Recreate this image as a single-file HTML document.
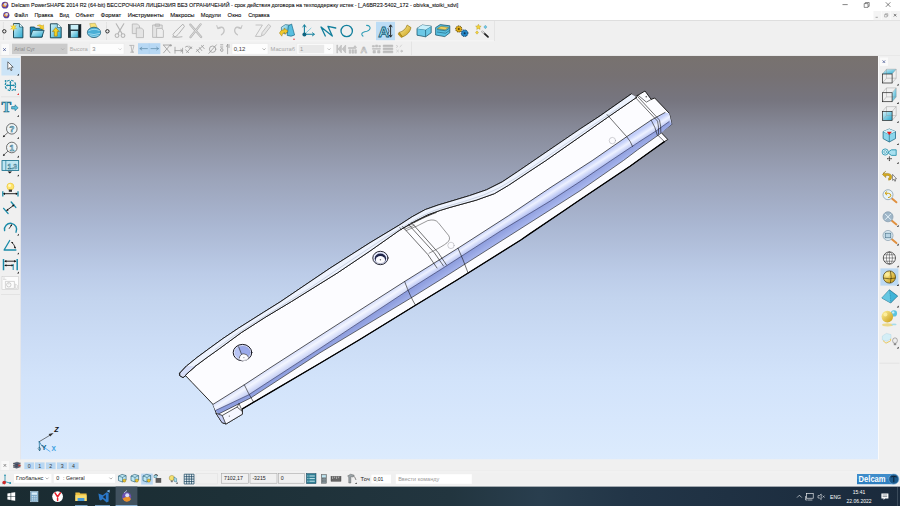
<!DOCTYPE html>
<html lang="ru"><head><meta charset="utf-8"><title>Delcam PowerSHAPE</title>
<style>
html,body{margin:0;padding:0;background:#f0f0f0;overflow:hidden}
body{width:900px;height:506px;position:relative;font-family:"Liberation Sans",sans-serif}
svg{position:absolute;left:0;top:0;display:block}
text{font-family:"Liberation Sans",sans-serif}
</style></head><body>
<svg width="900" height="506" viewBox="0 0 900 506">
<defs>
<linearGradient id="vp" x1="0" y1="0" x2="0" y2="1">
<stop offset="0" stop-color="#78726f"/>
<stop offset="0.05" stop-color="#767173"/>
<stop offset="0.11" stop-color="#76757f"/>
<stop offset="0.18" stop-color="#878a99"/>
<stop offset="0.30" stop-color="#9ba3b9"/>
<stop offset="0.42" stop-color="#aab7d2"/>
<stop offset="0.54" stop-color="#bccce8"/>
<stop offset="0.60" stop-color="#c3d4ee"/>
<stop offset="0.70" stop-color="#cbdcf5"/>
<stop offset="0.80" stop-color="#d2e3fa"/>
<stop offset="0.90" stop-color="#d7e7fc"/>
<stop offset="1" stop-color="#dcebfd"/>
</linearGradient>
<linearGradient id="band" gradientUnits="userSpaceOnUse" x1="404.6" y1="281.5" x2="410.3" y2="290.4">
<stop offset="0" stop-color="#c3cffa"/>
<stop offset="0.4" stop-color="#edf1ff"/>
<stop offset="1" stop-color="#acbaf1"/>
</linearGradient>
<linearGradient id="band2" gradientUnits="userSpaceOnUse" x1="410.3" y1="290.4" x2="415" y2="297.6">
<stop offset="0" stop-color="#8e9ede"/><stop offset="1" stop-color="#a9b7ee"/>
</linearGradient>
<linearGradient id="cy" x1="0" y1="0" x2="1" y2="1">
<stop offset="0" stop-color="#d8f4fb"/><stop offset="1" stop-color="#2aa9cf"/>
</linearGradient>
<linearGradient id="gold" x1="0" y1="0" x2="1" y2="1">
<stop offset="0" stop-color="#fff2a0"/><stop offset="1" stop-color="#c89a10"/>
</linearGradient>
<linearGradient id="tb" x1="0" y1="0" x2="1" y2="0">
<stop offset="0" stop-color="#1a2b31"/><stop offset="0.25" stop-color="#1d3037"/><stop offset="0.5" stop-color="#22353f"/><stop offset="0.6" stop-color="#293e4e"/><stop offset="0.7" stop-color="#223547"/><stop offset="1" stop-color="#1a2a3c"/>
</linearGradient>
</defs>
<rect x="0" y="0" width="900" height="506" fill="#f0f0f0"/>
<rect x="0" y="0" width="900" height="20.3" fill="#ffffff"/>
<rect x="0" y="20.2" width="900" height="0.7" fill="#d4d4d4"/>
<rect x="21" y="56" width="857" height="403.5" fill="url(#vp)"/>
<g stroke-linejoin="round" stroke-linecap="round">
<polygon points="179.8,373.1 186.5,366.0 197.0,357.5 208.7,348.9 223.0,338.5 238.7,328.0 263.4,312.4 280.0,302.0 330.0,268.2 370.0,242.7 399.1,225.2 412.2,216.7 425.2,209.6 438.2,205.0 450.0,201.5 469.6,195.6 486.5,189.8 502.2,181.9 517.8,171.5 540.0,156.3 579.1,129.6 600.0,115.9 631.2,94.0 634.6,97.3 638.0,95.2 645.0,91.0 651.2,99.4 654.7,98.0 669.2,113.2 671.8,124.3 660.9,132.3 667.8,139.5 664.4,141.6 664.4,141.6 652.6,150.0 630.0,166.3 580.0,199.8 565.0,210.0 530.0,233.6 520.8,240.0 457.0,280.0 415.5,305.2 359.0,340.0 320.0,363.2 270.0,392.6 242.4,408.9 242.4,414.2 226.0,424.0 222.2,422.6 216.3,413.5 213.0,404.4 206.0,397.0 199.0,389.7 192.0,382.4 185.6,375.7 183.0,377.6 179.8,375.7" fill="#fcfcff" stroke="#111" stroke-width="0.9"/>
<polygon points="213.0,404.4 244.3,384.8 270.0,367.9 320.0,335.7 404.6,281.5 458.0,248.2 508.7,215.6 550.0,187.8 592.2,160.6 626.7,136.7 651.2,120.1 665.0,112.5 669.2,113.2 671.8,124.3 669.2,121.5 656.7,130.5 640.0,141.2 610.4,161.0 580.0,181.6 550.0,201.2 500.0,231.4 440.0,270.0 408.6,289.8 320.0,348.4 248.3,395.0 215.5,410.5" fill="url(#band)" stroke="none"/>
<polygon points="215.5,410.5 248.3,395.0 320.0,348.4 408.6,289.8 440.0,270.0 500.0,231.4 550.0,201.2 580.0,181.6 610.4,161.0 640.0,141.2 656.7,130.5 669.2,121.5 671.8,124.3 660.9,133.3 637.4,150.0 623.5,160.5 580.0,190.8 550.0,210.0 502.8,240.0 440.0,280.0 410.5,298.3 320.0,352.8 251.0,397.8 239.1,403.7 218.2,414.2" fill="url(#band2)" stroke="none"/>
<polygon points="213.0,404.4 244.3,384.8 270.0,367.9 320.0,335.7 404.6,281.5 408.6,289.8 320.0,348.4 248.3,395.0 215.5,410.5" fill="#ffffff" opacity="0.32"/>
<polyline points="213.0,404.4 244.3,384.8 270.0,367.9 320.0,335.7 404.6,281.5 458.0,248.2 508.7,215.6 550.0,187.8 592.2,160.6 626.7,136.7 651.2,120.1 665.0,112.5" fill="none" stroke="#111" stroke-width="0.7"/>
<polyline points="669.2,121.5 656.7,130.5 640.0,141.2 610.4,161.0 580.0,181.6 550.0,201.2 500.0,231.4 440.0,270.0 408.6,289.8 320.0,348.4 248.3,395.0 215.5,410.5" fill="none" stroke="#1e2450" stroke-width="0.6"/>
<polyline points="660.9,133.3 637.4,150.0 623.5,160.5 580.0,190.8 550.0,210.0 502.8,240.0 440.0,280.0 410.5,298.3 320.0,352.8 251.0,397.8 239.1,403.7 218.2,414.2" fill="none" stroke="#111" stroke-width="0.6"/>
<polyline points="664.4,141.6 652.6,150.0 630.0,166.3 580.0,199.8 565.0,210.0 530.0,233.6 520.8,240.0 457.0,280.0 415.5,305.2 359.0,340.0 320.0,363.2 270.0,392.6 242.4,408.9" fill="none" stroke="#000" stroke-width="1.3"/>
<polyline points="185.6,375.0 195.6,366.0 207.0,357.5 219.1,348.9 241.3,332.6 264.7,317.6 291.5,301.5 337.3,273.0 370.0,251.0 399.1,230.5 414.8,221.3 427.8,214.8 440.8,210.2 450.0,207.4 476.1,200.2 494.3,193.7 508.7,185.2 528.2,172.2 545.2,161.0 585.6,132.8 607.8,117.2 636.7,97.3" fill="none" stroke="#111" stroke-width="0.9"/>
<polygon points="179.8,373.1 186.5,366.0 197.0,357.5 208.7,348.9 223.0,338.5 238.7,328.0 263.4,312.4 280.0,302.0 330.0,268.2 370.0,242.7 399.1,225.2 412.2,216.7 425.2,209.6 438.2,205.0 450.0,201.5 469.6,195.6 486.5,189.8 502.2,181.9 517.8,171.5 540.0,156.3 579.1,129.6 600.0,115.9 631.2,94.0 636.7,97.3 607.8,117.2 585.6,132.8 545.2,161.0 528.2,172.2 508.7,185.2 494.3,193.7 476.1,200.2 450.0,207.4 440.8,210.2 427.8,214.8 414.8,221.3 399.1,230.5 370.0,251.0 337.3,273.0 291.5,301.5 264.7,317.6 241.3,332.6 219.1,348.9 207.0,357.5 195.6,366.0 185.6,375.0" fill="#eef3fe" stroke="none"/>
<polyline points="179.8,373.1 186.5,366.0 197.0,357.5 208.7,348.9 223.0,338.5 238.7,328.0 263.4,312.4 280.0,302.0 330.0,268.2 370.0,242.7 399.1,225.2 412.2,216.7 425.2,209.6 438.2,205.0 450.0,201.5 469.6,195.6 486.5,189.8 502.2,181.9 517.8,171.5 540.0,156.3 579.1,129.6 600.0,115.9 631.2,94.0" fill="none" stroke="#111" stroke-width="0.9"/>
<polyline points="185.6,375.0 195.6,366.0 207.0,357.5 219.1,348.9 241.3,332.6 264.7,317.6 291.5,301.5 337.3,273.0 370.0,251.0 399.1,230.5 414.8,221.3 427.8,214.8 440.8,210.2 450.0,207.4 476.1,200.2 494.3,193.7 508.7,185.2 528.2,172.2 545.2,161.0 585.6,132.8 607.8,117.2 636.7,97.3" fill="none" stroke="#111" stroke-width="0.9"/>
<polyline points="215.1,349.5 233.3,336.2 252.9,323.4 278.6,307.6 309.8,288.1 351.2,260.2 385.8,237.2 408.2,223.8 421.2,216.3 434.2,210.5 445.3,206.8 464.2,201.4 483.2,195.2 498.8,188.1 516.4,177.7 532.7,166.8 564.0,145.2 594.7,124.0 619.6,107.2" fill="none" stroke="#a9b4c8" stroke-width="0.5"/>
<path d="M402.4 226.5 L427.8 254.5 L437 268 M411.5 222.6 L438.2 252.6 L446.5 265 M408.5 224.5 L434.5 253 L443.5 266" fill="none" stroke="#111" stroke-width="0.6"/>
<path d="M607.1 114.6 L626.7 136.7 Q630.5 141 632.6 146.5" fill="none" stroke="#111" stroke-width="0.6"/>
<path d="M637.4 96.3 L659.5 120.1 Q661 126 660.9 132.6 M635.5 97.6 L657.6 121.2 Q659 127 658.5 134" fill="none" stroke="#111" stroke-width="0.6"/>
<path d="M651.2 120.1 Q655.4 127 657.4 135.4" fill="none" stroke="#111" stroke-width="0.6"/>
<path d="M458 248.2 Q463 259 468 272.8 M404.6 281.5 Q410.5 297.3 415.5 305.2 M244.3 384.8 Q248.2 393.3 253.4 401.8" fill="none" stroke="#111" stroke-width="0.6"/>
<path d="M638 95.2 L646.4 102.1 L651.2 99.4 M658.1 135.4 L664.4 141.6" fill="none" stroke="#111" stroke-width="0.6"/>
<circle cx="646.2" cy="96.8" r="0.7" fill="#333"/>
<path d="M403.5 227.8 L413 223.8 M404.8 229.2 L414.3 225.2 M406.1 230.6 L415.6 226.6 M399.5 227.2 L401.6 229.8" fill="none" stroke="#222" stroke-width="0.45"/>
<path d="M414 222.4 Q424 217 436 212.4" fill="none" stroke="#333" stroke-width="1.2" stroke-dasharray="0.5 0.5"/>
<path d="M416.1 226.5 L427.8 220.6 Q435 218.6 438.2 222.6 L448.7 235.6 Q451 239.5 447 242.8 Q443.4 246 429.1 253.2" fill="none" stroke="#333" stroke-width="0.5"/>
<circle cx="451" cy="245.4" r="3.2" fill="none" stroke="#8a8a92" stroke-width="0.4"/>
<circle cx="612.4" cy="140.6" r="3.2" fill="none" stroke="#8a8a92" stroke-width="0.4"/>
<ellipse cx="242.5" cy="352.6" rx="9.3" ry="8.2" fill="#dde3fc" stroke="#15151f" stroke-width="1"/>
<ellipse cx="242.7" cy="352.4" rx="7.5" ry="6.4" fill="#9aa9ea" stroke="#8a94c8" stroke-width="0.3"/>
<path d="M238.6 346.7 Q235 349 235 352.6 Q235.4 356.6 239 358.4 Q239.6 356 241.6 354.6 Z" fill="#b9c5f5"/>
<path d="M238.6 346.7 L241.6 354.6" stroke="#111" stroke-width="0.6" fill="none"/>
<ellipse cx="243.8" cy="357.4" rx="4.6" ry="3.6" fill="#fbfbff"/>
<path d="M239.3 358 Q240 353.9 243.8 353.8 Q247.6 354 248.5 357.2" fill="none" stroke="#15151f" stroke-width="0.6"/>
<path d="M235.5 357.8 Q242.5 364 249.8 357.6" fill="none" stroke="#8a8a96" stroke-width="0.5"/>
<circle cx="243.9" cy="357.6" r="0.6" fill="#888"/>
<ellipse cx="380.4" cy="258" rx="7.6" ry="6.7" fill="#e6eafd" stroke="#15151f" stroke-width="0.9"/>
<ellipse cx="380.4" cy="258.5" rx="5.7" ry="5" fill="#1e2448"/>
<ellipse cx="380.4" cy="259.9" rx="4.7" ry="3.9" fill="#fbfbff"/>
<path d="M374.2 261.4 Q380.4 266.2 386.6 261.2" fill="none" stroke="#5a5f80" stroke-width="0.4"/>
<circle cx="380.4" cy="259.8" r="0.7" fill="#666"/>
<polygon points="218.2,414.2 222.2,415.5 237.1,407 242.4,411.5 242.4,414.2 226,424 222.2,422.6 216.3,413.5" fill="#f6f7ff" stroke="#111" stroke-width="0.7"/>
<path d="M222.2 415.5 L225.5 423.6 M237.1 407 L239.1 403.7 M242.4 411.5 L239.1 403.7" fill="none" stroke="#111" stroke-width="0.6"/>
<polygon points="216.3,413.5 218.2,414.2 222.2,415.5 225.5,423.6 222.2,422.6" fill="#c4cdf4" stroke="#111" stroke-width="0.5"/>
<circle cx="229.3" cy="416.1" r="0.6" fill="#555"/>
<path d="M179.8 373.1 L186.5 366 L195.6 366 L185.6 375 L183 377.6 L179.8 375.7 Z" fill="#cfd8f6" stroke="none" opacity="0.8"/>
<path d="M179.8 373.1 L186.5 366 M185.6 375 L195.6 366 M179.8 373.1 L179.8 375.7 L183 377.6 L185.6 375.7" fill="none" stroke="#111" stroke-width="0.8"/>
</g>
<g fill="none" stroke-linecap="round">
<path d="M39.2 441.7 L51.5 434.3" stroke="#222" stroke-width="0.6"/>
<path d="M53.6 433 L48.6 434 L50.2 436.6 Z" fill="#333" stroke="none"/>
<path d="M39.2 441.7 L39.6 450.5 M39.2 441.7 L42 446" stroke="#0e6a96" stroke-width="0.7"/>
<path d="M39.6 447.2 L40.9 449 L39.6 450.8 L38.3 449 Z" stroke="#145" stroke-width="0.5"/>
<path d="M45 448 L50 451.5" stroke="#55aaee" stroke-width="0.9"/>
</g>
<text x="54.2" y="431.6" font-size="7.2" font-weight="bold" font-style="italic" fill="#111">Z</text>
<text x="41.4" y="450" font-size="7.4" font-weight="bold" fill="#0b5e86">Y</text>
<text x="51.6" y="451" font-size="6.6" font-weight="bold" fill="#3aa0e0">X</text>
<circle cx="5.0" cy="5.2" r="3.4" fill="#5a3fa0"/>
<path d="M2.3 6.2 a3.4 3.4 0 0 1 5.1 -3.1 l-1.7 4.1 z" fill="#e8902a"/>
<circle cx="5.3" cy="4.4" r="1.4" fill="#cfd6f5"/>
<text x="11.3" y="7.4" font-size="5.60" fill="#111" textLength="447.0" lengthAdjust="spacingAndGlyphs" stroke="#111" stroke-width="0.1">Delcam PowerSHAPE 2014 R2 (64-bit) БЕССРОЧНАЯ ЛИЦЕНЗИЯ БЕЗ ОГРАНИЧЕНИЙ - срок действия договора на техподдержку истек - [_A6BR23-5402_172 - obivka_stoiki_sdvi]</text>
<path d="M842.5 4.6 h5.2" stroke="#333" stroke-width="0.6" fill="none"/>
<path d="M864.2 3.6 h3.8 v3.8 h-3.8 z M865.4 3.6 v-1.1 h3.8 v3.8 h-1.2" stroke="#333" stroke-width="0.55" fill="none"/>
<path d="M885.8 2.3 l4.6 4.6 m0 -4.6 l-4.6 4.6" stroke="#333" stroke-width="0.6" fill="none"/>
<rect x="873.5" y="11" width="26.5" height="9.2" fill="#f4f4f4"/>
<path d="M875.6 17.3 h2.2" stroke="#555" stroke-width="0.5"/><path d="M884.6 14.6 h2.4 v2.4 h-2.4 z M885.4 14.6 v-0.9 h2.4 v2.4 h-0.8" stroke="#666" stroke-width="0.4" fill="none"/><path d="M893.8 13.9 l2.6 2.6 m0 -2.6 l-2.6 2.6" stroke="#333" stroke-width="0.6"/>
<path d="M881.5 11 v9 M890.5 11 v9" stroke="#fff" stroke-width="0.5"/>
<circle cx="6.3" cy="15.2" r="3.1" fill="#5a3fa0"/>
<path d="M3.8 16.1 a3.1 3.1 0 0 1 4.7 -2.8 l-1.6 3.7 z" fill="#e8902a"/>
<circle cx="6.6" cy="14.4" r="1.3" fill="#cfd6f5"/>
<text x="14.3" y="17.3" font-size="5.60" fill="#111" textLength="13.6" lengthAdjust="spacingAndGlyphs" stroke="#111" stroke-width="0.1">Файл</text>
<text x="34.4" y="17.3" font-size="5.60" fill="#111" textLength="18.6" lengthAdjust="spacingAndGlyphs" stroke="#111" stroke-width="0.1">Правка</text>
<text x="59.6" y="17.3" font-size="5.60" fill="#111" textLength="9.4" lengthAdjust="spacingAndGlyphs" stroke="#111" stroke-width="0.1">Вид</text>
<text x="75.6" y="17.3" font-size="5.60" fill="#111" textLength="18.8" lengthAdjust="spacingAndGlyphs" stroke="#111" stroke-width="0.1">Объект</text>
<text x="100.8" y="17.3" font-size="5.60" fill="#111" textLength="20.3" lengthAdjust="spacingAndGlyphs" stroke="#111" stroke-width="0.1">Формат</text>
<text x="127.8" y="17.3" font-size="5.60" fill="#111" textLength="35.9" lengthAdjust="spacingAndGlyphs" stroke="#111" stroke-width="0.1">Инструменты</text>
<text x="170.2" y="17.3" font-size="5.60" fill="#111" textLength="24.3" lengthAdjust="spacingAndGlyphs" stroke="#111" stroke-width="0.1">Макросы</text>
<text x="200.8" y="17.3" font-size="5.60" fill="#111" textLength="20.2" lengthAdjust="spacingAndGlyphs" stroke="#111" stroke-width="0.1">Модули</text>
<text x="227.6" y="17.3" font-size="5.60" fill="#111" textLength="13.6" lengthAdjust="spacingAndGlyphs" stroke="#111" stroke-width="0.1">Окно</text>
<text x="248.2" y="17.3" font-size="5.60" fill="#111" textLength="21.3" lengthAdjust="spacingAndGlyphs" stroke="#111" stroke-width="0.1">Справка</text>

<rect x="0" y="40.6" width="494" height="0.6" fill="#fafafa"/>
<rect x="494" y="21" width="0.6" height="20" fill="#dcdcdc"/>
<rect x="411" y="41.5" width="0.6" height="14" fill="#dcdcdc"/>
<rect x="0" y="55.3" width="900" height="0.7" fill="#e4e4e4"/>
<path d="M3.4 22.5 v17.5" stroke="#b8b8b8" stroke-width="0.5" stroke-dasharray="0.6 0.6"/>
<circle cx="4.3" cy="31.3" r="1.7" fill="#e8e8e8" stroke="#2e2e2e" stroke-width="1"/>
<path d="M106.5 22.5 v17.5" stroke="#b8b8b8" stroke-width="0.5" stroke-dasharray="0.6 0.6"/>
<circle cx="107.4" cy="31.3" r="1.7" fill="#e8e8e8" stroke="#2e2e2e" stroke-width="1"/>
<path d="M13.5 23.6 h6 l3.4 3.4 v10.8 h-9.4 z" fill="url(#cy)" stroke="#0d3a4a" stroke-width="0.9"/>
<path d="M19.5 23.6 v3.4 h3.4" fill="#e9fbff" stroke="#0d3a4a" stroke-width="0.6"/>
<path d="M13.3 24 l0.9 2.1 2.2-0.6-1.4 1.8 1.6 1.6-2.3-0.3-0.6 2.3-0.9-2.1-2.3 0.5 1.6-1.7-1.4-1.8 2.2 0.4z" fill="#ffe23a" stroke="#a07a00" stroke-width="0.25"/>
<path d="M30.3 27 h4.2 l1.2 1.3 h6.5 v8.8 h-11.9 z" fill="#1f8fc0" stroke="#0d3a4a" stroke-width="0.8"/>
<path d="M30.3 37.1 l2.4-6.8 h11.4 l-2.2 6.8 z" fill="url(#cy)" stroke="#0d3a4a" stroke-width="0.8"/>
<path d="M37 25.6 q3-2 5.2 0.2 l1.3-1 0.3 4.6-4.3-1 1.3-1.1 q-1.6-1.5-3.8-1.7z" fill="#f7cf2a" stroke="#a07a00" stroke-width="0.3"/>
<path d="M50.4 23.8 h7 l3.8 3.8 v10.2 h-10.8 z" fill="url(#cy)" stroke="#0d3a4a" stroke-width="0.9"/>
<path d="M57.4 23.8 v3.8 h3.8" fill="#e9fbff" stroke="#0d3a4a" stroke-width="0.6"/>
<path d="M55.8 27.6 l3.5 4 h-2 v4.6 h-3 v-4.6 h-2 z" fill="#f5d020" stroke="#7a5c00" stroke-width="0.45"/>
<rect x="68.3" y="24.6" width="12.6" height="12.8" fill="#233a44" stroke="#101a20" stroke-width="0.6"/>
<rect x="70.6" y="24.9" width="7.6" height="4.6" fill="#c8eef8"/>
<rect x="70.9" y="31" width="7" height="6.4" fill="url(#cy)"/>
<rect x="79" y="25" width="1.6" height="12" fill="#101a20"/>
<path d="M89.7 23.6 l5.5-0.4 2 4.4 -6 1.2 z" fill="#f8e27a" stroke="#a08a30" stroke-width="0.4"/>
<ellipse cx="94" cy="32.4" rx="6.6" ry="5.2" fill="#49aed6" stroke="#12506a" stroke-width="0.7"/>
<path d="M88.4 31 q5.5-3.2 11.4-0.3 M88 33.6 q6 2 12 -0.2 M89.6 35.6 q4.5 1.6 9 -0.1" fill="none" stroke="#bfe9f6" stroke-width="0.7"/>
<g fill="none" stroke="#b4b4b4" stroke-width="1.1" stroke-linecap="round">
<path d="M116.2 23.8 L122 33.6 M123.8 23.8 L118 33.6"/><circle cx="117" cy="35.6" r="1.9"/><circle cx="123" cy="35.6" r="1.9"/>
</g>
<g fill="#e4e4e4" stroke="#b4b4b4" stroke-width="0.8">
<path d="M132.3 24 h5.2 l2 2 v7.6 h-7.2z"/><path d="M136.3 28 h5.2 l2 2 v7.6 h-7.2z"/>
<path d="M152.6 25 h9.6 v12.4 h-9.6z"/><path d="M155.2 24 h4.4 v2.2 h-4.4z" fill="#cfcfcf"/><path d="M156.6 28.4 h5 l1.8 1.8 v7.2 h-6.8z" fill="#eee"/>
</g>
<g fill="none" stroke="#b4b4b4" stroke-width="1" stroke-linecap="round">
<path d="M182.6 24.4 l-7.6 7.4 q-3.4 3-1.2 4.6 q2 1.3 4.4-2 l6-7.6 z M172.6 37 q4 0.8 9.4-0.2"/>
</g>
<path d="M190.2 24.6 L201.2 37 M200.6 24.4 L190.4 37.2" stroke="#b4b4b4" stroke-width="2.2" stroke-linecap="round" fill="none"/>
<path d="M190.2 24.6 L201.2 37 M200.6 24.4 L190.4 37.2" stroke="#e6e6e6" stroke-width="0.8" stroke-linecap="round" fill="none"/>
<g fill="none" stroke="#c2c2c2" stroke-width="1.3" stroke-linecap="round">
<path d="M218.2 28 q4.5-2.2 5.8 1.4 q0.8 3.2-2.6 5.4"/><path d="M216.8 25.6 l1 3.2 3.2-1" stroke-width="1"/>
<path d="M240.6 28 q-4.5-2.2-5.8 1.4 q-0.8 3.2 2.6 5.4"/><path d="M242 25.6 l-1 3.2-3.2-1" stroke-width="1"/>
</g>
<g fill="none" stroke="#bcbcbc" stroke-width="0.9" stroke-linecap="round">
<path d="M256 25 h6.4 l-7 11.4 h5.6"/><path d="M268.8 24.6 l2 1.6 -6.6 8.6 -2.8 1 0.6-2.8z" fill="#e6e6e6"/>
</g>
<path d="M281.4 27.2 l4-2.6 4.6 0.6 0 5.4 -4.4 3 -4.2-1z" fill="url(#cy)" stroke="#0e5a78" stroke-width="0.6"/>
<path d="M288.4 25.8 l3.2-1.8 3 11 q-3.4 2.2-7.4 0.4z" fill="#58bfe0" stroke="#0e5a78" stroke-width="0.6"/>
<path d="M279.4 33 q1.6-3.4 5-3.4 l-0.4-1.6 4 3-3 3.4-0.2-1.8 q-2.4 0-3 3.6z" fill="#f2c92c" stroke="#8a6800" stroke-width="0.4"/>
<circle cx="294" cy="39.2" r="0.7" fill="#e02020"/>
<g fill="none" stroke="#117f9c" stroke-width="1.1" stroke-linecap="round" stroke-linejoin="round">
<path d="M304.4 25.4 V34.3 H313.6"/>
<path d="M304.4 34.3 L311 28.2" stroke="#7cc4d6" stroke-width="0.9"/>
<path d="M302.8 27 l1.6-2.4 1.6 2.4 M312.4 32.8 l2.2 1.5-2.2 1.5" stroke-width="0.9"/>
</g>
<circle cx="304.4" cy="34.4" r="2" fill="#0e6480"/>
<path d="M325.3 36 L321 27 L332.3 36 L328 26.4 L335.7 28" fill="none" stroke="#117f9c" stroke-width="1.3" stroke-linejoin="round" stroke-linecap="round"/>
<circle cx="346.7" cy="31" r="5.7" fill="none" stroke="#117f9c" stroke-width="1.3"/>
<path d="M366.6 25.4 Q370.6 25.6 370 28.6 Q369.2 31 364.7 31.8 Q361 33 362 35 L363 36.2" fill="none" stroke="#2a9ab4" stroke-width="1.1" stroke-linecap="round"/>
<rect x="376" y="21.8" width="19" height="18.4" fill="#bcdcf5"/>
<text x="378.2" y="37.2" font-size="15" font-weight="bold" fill="#a8e2f0" stroke="#0e5a78" stroke-width="0.8">A</text>
<path d="M390.6 25.2 v11.6 M389 27.2 l1.6-2.4 1.6 2.4 M389 34.8 l1.6 2.4 1.6-2.4" fill="none" stroke="#1a1a1a" stroke-width="0.9"/>
<path d="M387.8 28 q2.4 3 0 6.4" fill="none" stroke="#1a1a1a" stroke-width="0.6"/>
<path d="M407.2 25 l3.8 2.6 q-1.4 6.6-8.6 9.4 l-3.2-4.6 q5.8-1.4 8-7.4z" fill="url(#gold)" stroke="#8a6a00" stroke-width="0.6" stroke-linejoin="round"/>
<path d="M399.2 32.4 l-1.2 1.6 3.2 3.6 1.2-0.6z" fill="#c89a10" stroke="#8a6a00" stroke-width="0.4"/>
<path d="M417 28.4 l5.2-3.4 9 1.2 v6.6 l-5.6 4 -8.6-1.6z" fill="#6cc8e6" stroke="#0e4a62" stroke-width="0.7"/>
<path d="M417 28.4 l8.6 1.4 5.6-3.6 M425.6 29.8 v7" fill="none" stroke="#0e4a62" stroke-width="0.6"/>
<path d="M417 28.4 l5.2-3.4 9 1.2 -5.6 3.6z" fill="#c9effa"/>
<path d="M435.6 27.6 l4.6-3 9.6 1.2 v7 l-5 3.8 -9.2-1.6z" fill="#58bfe0" stroke="#0e4a62" stroke-width="0.7"/>
<path d="M437 29.6 l8.6 1.2 4-2.8 M437 32 l8.6 1.2 4-2.8" fill="none" stroke="#0e4a62" stroke-width="0.5"/>
<path d="M437.4 28.6 l3.6-2.2 7.6 1 -3.4 2.4z" fill="#f0d060" stroke="#7a5a00" stroke-width="0.4"/>
<circle cx="458.8" cy="29" r="3.1" fill="#dcaa18" stroke="#4a3800" stroke-width="1" stroke-dasharray="1.1 0.8"/>
<circle cx="458.8" cy="29" r="1" fill="#5a4400"/>
<circle cx="464.6" cy="33.2" r="3.3" fill="#2284c4" stroke="#0c3456" stroke-width="1" stroke-dasharray="1.1 0.8"/>
<circle cx="464.6" cy="33.2" r="1" fill="#0c3456"/>
<path d="M482.4 31.6 l5.6 5.2" stroke="#222" stroke-width="1.8" stroke-linecap="round"/>
<path d="M482.2 31.4 l1.6 1.5" stroke="#ddd" stroke-width="1.6" stroke-linecap="round"/>
<path d="M478.4 24.2 l0.9 1.7 1.9 0.3-1.4 1.3 0.3 1.9-1.7-0.9-1.7 0.9 0.3-1.9-1.4-1.3 1.9-0.3z" fill="#f2d23a" stroke="#9a7a00" stroke-width="0.3"/>
<path d="M485.4 25.2 l1.6 1.8-1.6 1.8-1.6-1.8z" fill="#6cc8e6" stroke="#2a7a9a" stroke-width="0.3"/>
<path d="M477 30.8 l1.5 1.7-1.5 1.7-1.5-1.7z" fill="#f2d23a" stroke="#9a7a00" stroke-width="0.3"/>

<rect x="1.4" y="44" width="7.6" height="11" fill="#fafafa"/>
<path d="M3.2 48.2 l2.6 2.8 m0-2.8 l-2.6 2.8" stroke="#3a4a8a" stroke-width="0.7"/>
<rect x="12" y="43.7" width="55.5" height="10.4" fill="#cbcbcb"/>
<text x="14.2" y="51.0" font-size="5.60" fill="#8c8c8c" textLength="20.6" lengthAdjust="spacingAndGlyphs" >Arial Cyr</text>
<path d="M61.2 48.4 l1.5 1.5 1.5-1.5" fill="none" stroke="#999" stroke-width="0.5"/>
<text x="69.8" y="51.0" font-size="5.30" fill="#a6a6a6" textLength="18.0" lengthAdjust="spacingAndGlyphs" >Высота</text>
<rect x="90" y="43.7" width="34" height="10.4" fill="#fdfdfd" stroke="#e6e6e6" stroke-width="0.4"/>
<text x="92.2" y="51.0" font-size="5.80" fill="#8a8a8a" >3</text>
<path d="M118.6 48.4 l1.5 1.5 1.5-1.5" fill="none" stroke="#aaa" stroke-width="0.5"/>
<g fill="none" stroke="#b0b0b0" stroke-width="0.8" stroke-linecap="round">
<path d="M129.6 45.4 h4.4 l-1.8 6.6 h1.2 M130.6 52.2 h3 M131 45.4 l1 6.6"/>
</g>
<rect x="138" y="43.2" width="22.4" height="11" fill="#b7d8f4"/>
<path d="M149.2 43.4 v10.6" stroke="#a5cbea" stroke-width="0.5"/>
<g fill="none" stroke="#5f8aa8" stroke-width="0.7" stroke-linecap="round">
<path d="M140 48.6 h7.4 M141.8 47.2 l-1.8 1.4 1.8 1.4 M151 48.6 h7.4 M156.6 47.2 l1.8 1.4 -1.8 1.4"/>
</g>
<g fill="none" stroke="#9a9a9a" stroke-width="0.8" stroke-linecap="round">
<path d="M163.6 45.2 l6.4 7.6 M170 45.2 l-6.4 7.6 M163.4 45 h6.8 M170.8 44.6 v1.6 m-0.8-0.8 h1.6"/>
<path d="M175 47.2 v6 M182.6 48.2 v5 M175 50.6 h7.6 M180.8 49.4 l1.8 1.2-1.8 1.2"/>
<path d="M185.4 47 q2-2 3 0 q1 2.4 3 0.6 M186.6 52.6 l5-5.6 M185.6 50 l3 2.6 M189.4 46 l2.4 2.6"/>
<path d="M196.2 51.6 l7.4-6.2 M196.8 49.4 l2.6 3.2 M199.4 47.6 l2.4 3 M201.6 45.6 l2.6 3"/>
<circle cx="212.6" cy="49.2" r="3.2"/><path d="M208.8 53.4 l7.6-8.6"/>
<path d="M220.6 44.8 h2.2 M220.4 47 h2.4 M220.6 50 a1.2 1.6 0 1 0 2.4 0 a1.2 1.6 0 1 0 -2.4 0 M227.6 44.4 v9.4 M226.6 46.4 l1 -2 M229 44.6 v3"/>
</g>
<rect x="232" y="43.7" width="36" height="10.4" fill="#fdfdfd" stroke="#e6e6e6" stroke-width="0.4"/>
<text x="233.8" y="51.0" font-size="5.60" fill="#3a3a3a" textLength="11.6" lengthAdjust="spacingAndGlyphs" >0,12</text>
<path d="M262.6 48.4 l1.5 1.5 1.5-1.5" fill="none" stroke="#666" stroke-width="0.5"/>
<text x="270.6" y="51.0" font-size="5.30" fill="#a6a6a6" textLength="24.4" lengthAdjust="spacingAndGlyphs" >Масштаб</text>
<rect x="297" y="43.7" width="36.4" height="10.4" fill="#fdfdfd" stroke="#e6e6e6" stroke-width="0.4"/>
<rect x="298.6" y="44.8" width="25.6" height="8.4" fill="#e9e9e9"/>
<text x="300.0" y="51.0" font-size="5.80" fill="#9a9a9a" >1</text>
<path d="M327.6 48.4 l1.5 1.5 1.5-1.5" fill="none" stroke="#888" stroke-width="0.5"/>
<g fill="#c4c4c4" stroke="#b4b4b4" stroke-width="0.5" stroke-linejoin="round">
<path d="M336.8 45 v8 h0.8 v-8z M341.4 45 l-3.4 4 3.4 4z M345.6 45 l-3.4 4 3.4 4z"/>
<path d="M348.4 47.6 h5 l1.6-2 1.6 2 h-1 v1 h-7.2z M349.2 49.8 h1.6 v3.4 h-1.6z M352 49.8 h1.6 v3.4 h-1.6z M354.8 49.8 h1.6 v3.4 h-1.6z"/>
<path d="M372.4 45.6 h2 v1.4 h-2z M375.6 45 h2 v2 h-2z M378.8 45.6 h1.6 v1.4 h-1.6z M372.4 48.6 h8 v0.6 h-8z M373 50.6 h2.4 v2.4 h-2.4z M377.6 50.6 h2.4 v2.4 h-2.4z"/>
<path d="M383.2 45 h9.6 v1.8 h-9.6z M383.2 48 h9.6 v1.8 h-9.6z M383.2 51 h9.6 v1.8 h-9.6z" fill="#bdbdbd"/>
</g>
<text x="360.6" y="52.6" font-size="9" font-weight="bold" fill="#f0f0f0" stroke="#b0b0b0" stroke-width="0.6">A</text>
<g fill="none" stroke="#c2c2c2" stroke-width="0.6" stroke-linecap="round">
<path d="M396.4 45.4 l1.6 1 -1.6 1 M401.6 45 l-1.6 2 M396.6 50 l2 2 m0-2 l-2 2"/><circle cx="401.6" cy="51.2" r="0.9" fill="#c8c8c8"/>
</g>

<rect x="0" y="56" width="21" height="404" fill="#f0f0f0"/>
<rect x="20.2" y="56" width="0.8" height="404" fill="#e2e4ea"/>
<rect x="1.4" y="57.9" width="18.6" height="17.6" fill="#cce4f7"/>
<path d="M7.8 61.8 v7.6 l1.8-1.6 1.3 2.8 1.2-0.5 -1.3-2.8 2.4-0.1z" fill="#fff" stroke="#222" stroke-width="0.6" stroke-linejoin="round"/>
<path d="M18.9 75.6 v-1.8 l-1.8 1.8z" fill="#111"/>
<circle cx="10.4" cy="85.4" r="5.2" fill="none" stroke="#1a8aa8" stroke-width="1.2" stroke-dasharray="2.6 1.5"/>
<path d="M10.4 81.6 v7.6 M6.6 85.4 h7.6" stroke="#1a8aa8" stroke-width="1.1"/>
<path d="M10.4 80.8 l-1.2 1.6 h2.4z M10.4 90 l-1.2-1.6 h2.4z M5.8 85.4 l1.6-1.2 v2.4z M15 85.4 l-1.6-1.2 v2.4z" fill="#1a8aa8"/>
<circle cx="5.6" cy="81" r="0.9" fill="#1a8aa8"/><circle cx="15.2" cy="89.8" r="0.9" fill="#1a8aa8"/>
<path d="M18.9 94.9 v-1.8 l-1.8 1.8z" fill="#e02020"/>
<rect x="1" y="96.6" width="19" height="0.6" fill="#dadada"/>
<text x="1.6" y="112" font-size="14.5" font-weight="bold" style="font-family:&quot;Liberation Serif&quot;,serif" fill="#7fd0e6" stroke="#0e5a78" stroke-width="0.6">T</text>
<path d="M11.6 106.6 h3.4 v-1.8 l3.2 3 -3.2 3 v-1.8 h-3.4z" fill="#5cc0de" stroke="#0e5a78" stroke-width="0.5"/>
<path d="M18.9 116.7 v-1.8 l-1.8 1.8z" fill="#111"/>
<path d="M8 132.4 L3.6 136.4" stroke="#222" stroke-width="0.6"/>
<path d="M2.8 137.2 l2.4-0.6 -1.5-1.6z" fill="#111"/>
<circle cx="11.8" cy="128.8" r="5.3" fill="#eef4f6" stroke="#3a3a3a" stroke-width="0.7"/>
<text x="11.8" y="131.8" font-size="8.4" font-weight="bold" text-anchor="middle" fill="#bfe6f0" stroke="#2a6a80" stroke-width="0.45">?</text>
<path d="M18.9 138.7 v-1.8 l-1.8 1.8z" fill="#111"/>
<path d="M8 151.1 L3.6 155.1" stroke="#222" stroke-width="0.6"/>
<path d="M2.8 155.9 l2.4-0.6 -1.5-1.6z" fill="#111"/>
<circle cx="11.8" cy="147.5" r="5.3" fill="#eef4f6" stroke="#3a3a3a" stroke-width="0.7"/>
<text x="11.8" y="150.5" font-size="8.4" font-weight="bold" text-anchor="middle" fill="#bfe6f0" stroke="#2a6a80" stroke-width="0.45">1</text>
<path d="M18.9 157.4 v-1.8 l-1.8 1.8z" fill="#111"/>
<rect x="2" y="160.6" width="16.7" height="9.8" fill="#bfe6f2" stroke="#0e6a88" stroke-width="0.8"/>
<path d="M5.8 160.6 v9.8" stroke="#0e6a88" stroke-width="0.6"/>
<text x="12.4" y="168.6" font-size="7" font-weight="bold" text-anchor="middle" fill="#d8f2f8" stroke="#0e5a78" stroke-width="0.4">1.3</text>
<path d="M7.6 171.6 h4.4 l-2.2 2z" fill="#111"/>
<path d="M18.9 176.3 v-1.8 l-1.8 1.8z" fill="#111"/>
<circle cx="10.4" cy="186.6" r="3.5" fill="#ffe46a" stroke="#e0b820" stroke-width="0.5"/>
<circle cx="9.6" cy="185.6" r="1.5" fill="#fff6c0"/>
<rect x="8.8" y="189.6" width="3.2" height="2.2" fill="#333"/>
<path d="M3.4 193.7 h14" stroke="#111" stroke-width="0.9"/>
<path d="M2.8 193.7 l2.2-1.2 v2.4z M18 193.7 l-2.2-1.2 v2.4z" fill="#111"/>
<path d="M2.8 191.2 v5.2 M18 191.2 v5.2" stroke="#1a8aa8" stroke-width="1.3"/>
<path d="M3.6 208.4 l4.4 5 M11.2 202 l4.6 5.4" stroke="#1a8aa8" stroke-width="1.4" stroke-linecap="round"/>
<path d="M7 210.2 L13.6 205.4" stroke="#111" stroke-width="0.9"/>
<path d="M6 211 l2.6-0.4 -1.3-1.8z M14.6 204.6 l-2.6 0.4 1.3 1.8z" fill="#111"/>
<path d="M4.6 230.6 a6.1 6.1 0 1 1 11.4 1.6" fill="none" stroke="#1a8aa8" stroke-width="1.4" stroke-linecap="round"/>
<path d="M9 228.8 L11.6 225" stroke="#111" stroke-width="0.8"/><path d="M12.2 224 l-2 1.2 1.5 1.1z" fill="#111"/>
<path d="M18.9 235.6 v-1.8 l-1.8 1.8z" fill="#111"/>
<path d="M9.7 240.5 L4.1 250 H15.9" fill="none" stroke="#1a8aa8" stroke-width="1.3" stroke-linejoin="round" stroke-linecap="round"/>
<path d="M11.6 242.4 q3 1.6 3.4 5.6" fill="none" stroke="#111" stroke-width="0.8"/><path d="M15.2 249 l-1.2-2 2-0.2z M11 242 l2.2 0 -0.8 1.6z" fill="#111"/>
<path d="M18.9 254.3 v-1.8 l-1.8 1.8z" fill="#111"/>
<path d="M3.5 259 v11.2 M17.2 259 v11.2" stroke="#1a8aa8" stroke-width="1.5"/>
<path d="M5 261.2 h10.6 M5 265.4 h8" stroke="#111" stroke-width="0.9"/>
<path d="M4.2 261.2 l2.2-1.2 v2.4z M16.4 261.2 l-2.2-1.2 v2.4z M4.2 265.4 l2.2-1.2 v2.4z M13.8 265.4 l-2.2-1.2 v2.4z" fill="#111"/>
<path d="M13.2 264 v6" stroke="#1a8aa8" stroke-width="1"/>
<path d="M18.9 273.4 v-1.8 l-1.8 1.8z" fill="#111"/>
<rect x="2" y="276.3" width="16.6" height="13.2" fill="#fcfcfc" stroke="#c4c4c4" stroke-width="0.5"/>
<path d="M5.4 281.4 h9 v7 h-9z" fill="none" stroke="#b0b0b0" stroke-width="0.5"/><circle cx="8.8" cy="284.8" r="2.2" fill="none" stroke="#a0a0a0" stroke-width="0.5"/><path d="M8.8 282.8 v2 M3 278 h2 M3 279.4 h3.4 M15.4 284 v4.4 h2 v-3z" fill="none" stroke="#b0b0b0" stroke-width="0.4"/>
<rect x="1" y="294" width="19" height="0.6" fill="#dadada"/>
<rect x="878" y="56" width="22" height="404" fill="#f0f0f0"/>
<rect x="878" y="56" width="0.9" height="404" fill="#fbfbfb"/>
<rect x="880" y="57.5" width="8" height="8.4" fill="#fafafa"/>
<path d="M882.6 60.4 l2.6 2.6 m0-2.6 l-2.6 2.6" stroke="#3a4a8a" stroke-width="0.7"/>
<path d="M882.4 74.0 l4.1 -4.8 h9.7 l-4.1 4.8z" fill="url(#cy)"/>
<path d="M882.4 74.0 l4.1 -4.8 h9.7 v9.0 l-4.1 4.8 M892.1 74.0 l4.1 -4.8 M886.5 69.2 v9.0 h9.7 M882.4 83.0 l4.1 -4.8" fill="none" stroke="#9a9a9a" stroke-width="0.45"/>
<rect x="882.4" y="74.0" width="9.7" height="9.0" fill="none" stroke="#222" stroke-width="0.7"/>
<path d="M898.6 85.6 v-1.8 l-1.8 1.8z" fill="#111"/>
<path d="M892.1 92.7 l4.1 -4.8 v9.0 l-4.1 4.8z" fill="url(#cy)"/>
<path d="M882.4 92.7 l4.1 -4.8 h9.7 v9.0 l-4.1 4.8 M892.1 92.7 l4.1 -4.8 M886.5 87.9 v9.0 h9.7 M882.4 101.7 l4.1 -4.8" fill="none" stroke="#9a9a9a" stroke-width="0.45"/>
<rect x="882.4" y="92.7" width="9.7" height="9.0" fill="none" stroke="#222" stroke-width="0.7"/>
<path d="M898.6 103.9 v-1.8 l-1.8 1.8z" fill="#111"/>
<rect x="882.4" y="111.4" width="9.7" height="9.0" fill="url(#cy)"/>
<path d="M882.4 111.4 l4.1 -4.8 h9.7 v9.0 l-4.1 4.8 M892.1 111.4 l4.1 -4.8 M886.5 106.6 v9.0 h9.7 M882.4 120.4 l4.1 -4.8" fill="none" stroke="#9a9a9a" stroke-width="0.45"/>
<rect x="882.4" y="111.4" width="9.7" height="9.0" fill="none" stroke="#222" stroke-width="0.7"/>
<path d="M898.6 122.7 v-1.8 l-1.8 1.8z" fill="#111"/>
<path d="M889.3 129 l6.2 2.6 v7 l-6.2 3.4 -6.2-3.4 v-7z" fill="#8bd6ec" stroke="#0e5a78" stroke-width="0.7" stroke-linejoin="round"/>
<path d="M883.1 131.6 l6.2 2.8 6.2-2.8 M889.3 134.4 v7.6" fill="none" stroke="#0e5a78" stroke-width="0.6"/>
<path d="M889.3 129 l6.2 2.6 -6.2 2.8 -6.2-2.8z" fill="#d4f2fa"/>
<path d="M886.8 131.8 h5 l-2.5 3.2z" fill="#e01818"/>
<path d="M898.6 145.1 v-1.8 l-1.8 1.8z" fill="#111"/>
<circle cx="885.2" cy="152" r="3.1" fill="#dff4fa" stroke="#1a8aa8" stroke-width="0.8"/><circle cx="885.2" cy="152" r="1.4" fill="none" stroke="#1a8aa8" stroke-width="0.6"/>
<path d="M888.4 152 l3-2.2 h4.8 v5.6 h-4.8 l-3-2.2z" fill="#a8e0f0" stroke="#1a8aa8" stroke-width="0.8" stroke-linejoin="round"/>
<path d="M889.4 156.8 v3.8 M887.5 158.7 h3.8" stroke="#222" stroke-width="0.6"/><path d="M889.4 156.2 l-0.8 1 h1.6z M889.4 161.2 l-0.8-1 h1.6z M886.9 158.7 l1-0.8 v1.6z M891.9 158.7 l-1-0.8 v1.6z" fill="#222"/>
<path d="M898.6 163.8 v-1.8 l-1.8 1.8z" fill="#111"/>
<path d="M883 173.4 h4.8 q4.2 0.4 4 4 q-0.4 2.6-3.2 2.8 l0-2.2 q1.2-0.4 1-1.6 q-0.2-1-1.8-1 h-2 v2.2 l-3.4-3.2 3.4-3.2z" fill="#d4aa20" stroke="#8a6a00" stroke-width="0.4"/>
<path d="M892.6 174.4 v6 l1.3-1.1 0.9 2 0.9-0.4 -0.9-2 1.7-0.1z" fill="#fff" stroke="#222" stroke-width="0.5" stroke-linejoin="round"/>
<path d="M891.6 198.3 l4.8 4" stroke="#e09040" stroke-width="2" stroke-linecap="round"/>
<circle cx="888" cy="194.7" r="5" fill="#e8f4fa" stroke="#8aa0b0" stroke-width="0.8"/>
<path d="M885.4 193.3 h3 q2.6 0.2 2.4 2.4 q-0.3 1.8-2.4 1.9 M886.8 191.7 l-1.8 1.6 1.8 1.6" fill="none" stroke="#d0a010" stroke-width="1" stroke-linecap="round"/>
<path d="M891.6 220.4 l4.8 4" stroke="#e09040" stroke-width="2" stroke-linecap="round"/>
<circle cx="888" cy="216.8" r="5" fill="#9fb6c8" stroke="#8aa0b0" stroke-width="0.8"/>
<path d="M885 213.8 l6 6 M891 213.8 l-6 6" stroke="#e8f4fa" stroke-width="1"/>
<path d="M898.6 226.7 v-1.8 l-1.8 1.8z" fill="#111"/>
<path d="M891.6 239.1 l4.8 4" stroke="#e09040" stroke-width="2" stroke-linecap="round"/>
<circle cx="888" cy="235.5" r="5" fill="#dcecf4" stroke="#8aa0b0" stroke-width="0.8"/>
<rect x="885.2" y="233.2" width="5.6" height="4.6" fill="#b8d4e4" stroke="#4a7088" stroke-width="0.7"/>
<path d="M898.6 245.4 v-1.8 l-1.8 1.8z" fill="#111"/>
<circle cx="889.4" cy="258" r="6.1" fill="#fdfdfd" stroke="#222" stroke-width="0.7"/>
<path d="M883.3 258 h12.2 M889.4 251.9 v12.2 M884.2 254.8 h10.4 M884.2 261.2 h10.4" stroke="#222" stroke-width="0.45" fill="none"/><ellipse cx="889.4" cy="258" rx="3" ry="6.1" fill="none" stroke="#222" stroke-width="0.45"/>
<path d="M898.6 267.2 v-1.8 l-1.8 1.8z" fill="#111"/>
<rect x="880.4" y="268.4" width="18" height="17.2" fill="#bcd9f3"/>
<circle cx="889.4" cy="277" r="6.1" fill="url(#gold)" stroke="#4a3800" stroke-width="0.7"/>
<circle cx="887.4" cy="274.6" r="2.2" fill="#fff3a8" opacity="0.7"/>
<path d="M883.3 278 q6 1.6 12.2 0 M890.4 271 q1.6 6 0 12" stroke="#3a2c00" stroke-width="0.6" fill="none"/>
<path d="M898.6 285.9 v-1.8 l-1.8 1.8z" fill="#111"/>
<path d="M889.4 289.8 L881.8 298 L890.7 303 L897.7 296z" fill="#3fb4d8" stroke="#0e5a78" stroke-width="0.6" stroke-linejoin="round"/>
<path d="M889.4 289.8 L890.7 303" stroke="#0e5a78" stroke-width="0.5" stroke-dasharray="1 0.7"/>
<path d="M889.4 289.8 L881.8 298 L890.7 303z" fill="#7fd4ea" opacity="0.6"/>
<path d="M898.6 307.4 v-1.8 l-1.8 1.8z" fill="#111"/>
<ellipse cx="887.6" cy="324.8" rx="5.6" ry="1.6" fill="#ecd98a"/><ellipse cx="894" cy="324.4" rx="2.6" ry="0.9" fill="#a8dcea"/>
<circle cx="894" cy="313.4" r="3.1" fill="#5cc4e0"/><circle cx="893.2" cy="312.4" r="1.2" fill="#c8f0fa"/>
<circle cx="887.3" cy="316.6" r="5.8" fill="url(#gold)"/><circle cx="885.4" cy="314.4" r="2" fill="#fff3a8" opacity="0.8"/>
<path d="M882.4 336 l4-2.6 4.6 1.2 v4 l-4 2.6 -4.6-1.2z" fill="#d4eef6" stroke="#a8d0e0" stroke-width="0.4"/>
<path d="M883 340.6 l3 2.6 4.6-2.4 v-2" fill="none" stroke="#e8c860" stroke-width="1"/>
<ellipse cx="895" cy="340.6" rx="2.4" ry="2.8" fill="#ececec" stroke="#6a6a6a" stroke-width="0.5"/><rect x="893.8" y="343.2" width="2.4" height="2" fill="#8a8a8a"/>
<path d="M898.6 348.5 v-1.8 l-1.8 1.8z" fill="#111"/>
<rect x="879.5" y="362.8" width="20" height="0.6" fill="#dadada"/>

<rect x="0" y="459.5" width="900" height="28" fill="#f0f0f0"/>
<rect x="0" y="470.8" width="900" height="0.7" fill="#e0e0e0"/>
<rect x="0" y="471.5" width="900" height="0.6" fill="#fafafa"/>
<rect x="1.4" y="461" width="7.6" height="9" fill="#f8f8f8"/>
<path d="M3.6 464 l2.6 2.8 m0-2.8 l-2.6 2.8" stroke="#555" stroke-width="0.6"/>
<path d="M13 463.4 l4-1.2 3.6 1 -4 1.4z M13 465.2 l4-1.2 3.6 1 -4 1.4z M13 467 l4-1.2 3.6 1 -4 1.4z" fill="#5a6a8a" stroke="#222" stroke-width="0.4"/>
<path d="M18.4 464.6 l3 1 -3 1z" fill="#d03030"/>
<rect x="24.3" y="462.4" width="9.7" height="6.8" fill="#b9d7f2"/>
<text x="29.1" y="467.9" font-size="5.20" fill="#333" text-anchor="middle" >0</text>
<rect x="34.9" y="462.4" width="9.7" height="6.8" fill="#b9d7f2"/>
<text x="39.8" y="467.9" font-size="5.20" fill="#333" text-anchor="middle" >1</text>
<rect x="45.9" y="462.4" width="9.7" height="6.8" fill="#b9d7f2"/>
<text x="50.8" y="467.9" font-size="5.20" fill="#333" text-anchor="middle" >2</text>
<rect x="57.0" y="462.4" width="10.2" height="6.8" fill="#b9d7f2"/>
<text x="62.1" y="467.9" font-size="5.20" fill="#333" text-anchor="middle" >3</text>
<rect x="68.5" y="462.4" width="10.1" height="6.8" fill="#b9d7f2"/>
<text x="73.5" y="467.9" font-size="5.20" fill="#333" text-anchor="middle" >4</text>
<path d="M5 475 v6.6 l5.4 1.6 M5 481.6 l-2.6 2.2" fill="none" stroke="#1a8aa8" stroke-width="0.8"/>
<circle cx="4.2" cy="482.6" r="1.8" fill="#d02828"/><circle cx="10.2" cy="483" r="0.9" fill="#1a8aa8"/><path d="M5 474 l-1 1.8 h2z" fill="#1a8aa8"/>
<rect x="14" y="474" width="37.4" height="8.8" fill="#fff"/>
<text x="16.0" y="480.4" font-size="5.40" fill="#222" textLength="27.4" lengthAdjust="spacingAndGlyphs" >Глобальнс</text>
<path d="M45.6 477.6 l1.5 1.5 1.5-1.5" fill="none" stroke="#666" stroke-width="0.5"/>
<rect x="53.8" y="474" width="61.2" height="8.8" fill="#fff"/>
<text x="56.2" y="480.4" font-size="5.40" fill="#222" >0</text>
<text x="63.0" y="480.4" font-size="5.40" fill="#222" textLength="21.6" lengthAdjust="spacingAndGlyphs" >: General</text>
<path d="M109.4 477.6 l1.5 1.5 1.5-1.5" fill="none" stroke="#666" stroke-width="0.5"/>
<path d="M118.5 476 l3.6-1.6 4 1.2 v4.4 l-3.6 2 -4-1.4z" fill="#bfe8f4" stroke="#14506a" stroke-width="0.6" stroke-linejoin="round"/>
<path d="M118.5 476 l4 1.4 3.6-1.8 M122.5 477.4 v4.6" fill="none" stroke="#14506a" stroke-width="0.5"/>
<circle cx="124.3" cy="480.6" r="1.6" fill="#e8c030" stroke="#6a5000" stroke-width="0.3"/>
<path d="M131.0 476 l3.6-1.6 4 1.2 v4.4 l-3.6 2 -4-1.4z" fill="#bfe8f4" stroke="#14506a" stroke-width="0.6" stroke-linejoin="round"/>
<path d="M131.0 476 l4 1.4 3.6-1.8 M135.0 477.4 v4.6" fill="none" stroke="#14506a" stroke-width="0.5"/>
<circle cx="136.8" cy="480.6" r="1.6" fill="#e8c030" stroke="#6a5000" stroke-width="0.3"/>
<rect x="141.2" y="473.6" width="11.6" height="11" fill="#b9d7f2"/>
<path d="M143.0 476 l3.6-1.6 4 1.2 v4.4 l-3.6 2 -4-1.4z" fill="#bfe8f4" stroke="#14506a" stroke-width="0.6" stroke-linejoin="round"/>
<path d="M143.0 476 l4 1.4 3.6-1.8 M147.0 477.4 v4.6" fill="none" stroke="#14506a" stroke-width="0.5"/>
<circle cx="148.8" cy="480.6" r="1.6" fill="#e8c030" stroke="#6a5000" stroke-width="0.3"/>
<rect x="155.6" y="478" width="5.6" height="4.8" fill="#5a5a5a"/><path d="M154.4 478 v-2 a1.6 1.6 0 0 1 3.2 0" fill="none" stroke="#333" stroke-width="0.7"/><rect x="154" y="475.4" width="3" height="2.4" fill="#a8dcea" stroke="#14506a" stroke-width="0.3"/>
<circle cx="171.8" cy="478" r="2.6" fill="#f4e070" stroke="#8a7a20" stroke-width="0.4"/><rect x="170.8" y="480.4" width="2" height="1.8" fill="#777"/><path d="M174 477 l2.6 1.6 v3.6 l-2.6-1z" fill="#a8dcea" stroke="#14506a" stroke-width="0.4"/><path d="M177.6 483.8 v-1.6 l-1.6 1.6z" fill="#111"/>
<rect x="184.2" y="474.2" width="9.8" height="9.8" fill="#e8f0f4"/>
<path d="M184.2 474.2 h9.8 M184.2 476.65 h9.8 M184.2 479.1 h9.8 M184.2 481.55 h9.8 M184.2 484 h9.8 M184.2 474.2 v9.8 M186.65 474.2 v9.8 M189.1 474.2 v9.8 M191.55 474.2 v9.8 M194 474.2 v9.8" stroke="#14405a" stroke-width="0.7"/>
<rect x="196" y="473.4" width="21.6" height="10.6" fill="#f0f0f0" stroke="#dedede" stroke-width="0.5"/>
<rect x="221.7" y="473.4" width="26.9" height="9.8" fill="#f0f0f0" stroke="#9a9a9a" stroke-width="0.5"/>
<text x="224.1" y="480.4" font-size="5.20" fill="#222" >7102,17</text>
<rect x="250.0" y="473.4" width="27.0" height="9.8" fill="#f0f0f0" stroke="#9a9a9a" stroke-width="0.5"/>
<text x="252.4" y="480.4" font-size="5.20" fill="#222" >-3215</text>
<rect x="278.3" y="473.4" width="26.4" height="9.8" fill="#f0f0f0" stroke="#9a9a9a" stroke-width="0.5"/>
<text x="280.7" y="480.4" font-size="5.20" fill="#222" >0</text>
<rect x="306.4" y="473.6" width="9.6" height="10" fill="#2f7f94" stroke="#14405a" stroke-width="0.5"/><path d="M309.4 476 h5.4 M309.4 478.6 h5.4 M309.4 481.2 h5.4" stroke="#d8f0f6" stroke-width="0.9"/><path d="M307.4 476 h1 M307.4 478.6 h1 M307.4 481.2 h1" stroke="#d8f0f6" stroke-width="0.9"/>
<rect x="321.2" y="474.4" width="5.4" height="9" fill="#8a9aa0" stroke="#555" stroke-width="0.4"/><rect x="322" y="475.2" width="3.8" height="2" fill="#bfe8f4"/><path d="M322 478.6 h3.8 M322 480.2 h3.8 M322 481.8 h3.8" stroke="#444" stroke-width="0.6" stroke-dasharray="0.9 0.5"/>
<rect x="331" y="476.4" width="10" height="4.8" fill="#666" stroke="#333" stroke-width="0.4"/><path d="M332.6 476.6 v2.4 M334.6 476.6 v1.6 M336.6 476.6 v2.4 M338.6 476.6 v1.6" stroke="#eee" stroke-width="0.5"/>
<path d="M347.6 476 l3-1.8 3.6 1 -1 1.8 -2.4-0.4 v6.4 h-2 v-6z" fill="#9aa4a8" stroke="#444" stroke-width="0.4"/><path d="M354.4 476.4 l1.6 3.6" stroke="#444" stroke-width="0.6"/><path d="M356.6 484 v-1.6 l-1.6 1.6z" fill="#111"/>
<text x="360.6" y="481.0" font-size="5.40" fill="#222" textLength="9.2" lengthAdjust="spacingAndGlyphs" >Точ</text>
<rect x="371.4" y="474.6" width="19.6" height="8.8" fill="#fff"/>
<text x="373.4" y="481.0" font-size="5.20" fill="#222" textLength="10.0" lengthAdjust="spacingAndGlyphs" >0,01</text>
<rect x="395.8" y="474.2" width="76" height="9.6" fill="#fff"/>
<text x="398.2" y="481.0" font-size="5.20" fill="#9a9a9a" textLength="41.0" lengthAdjust="spacingAndGlyphs" >Ввести команду</text>
<rect x="857" y="474" width="36" height="10.2" fill="#2f7fc0"/>
<rect x="857" y="474" width="36" height="5" fill="#4a95d0" opacity="0.6"/>
<text x="858.6" y="482.4" font-size="8.60" fill="#fff" textLength="27.0" lengthAdjust="spacingAndGlyphs" font-weight="bold" >Delcam</text>
<circle cx="893.8" cy="479.1" r="5.1" fill="#1c5a8c" stroke="#7ab4e0" stroke-width="0.6"/>
<path d="M890.8 477 q3-1.4 6 0 M893.8 476.6 v5.6" stroke="#0a1a2a" stroke-width="0.9" fill="none"/>
<rect x="0" y="485.8" width="900" height="0.8" fill="#fafafa"/>
<rect x="0" y="486.6" width="900" height="19.4" fill="url(#tb)"/>
<rect x="115.6" y="486.6" width="21.8" height="19.4" fill="#41525f"/>
<rect x="75" y="505.2" width="12.5" height="0.8" fill="#8ab8e0"/><rect x="95" y="505.2" width="15" height="0.8" fill="#8ab8e0"/><rect x="115.6" y="505.2" width="21.8" height="0.8" fill="#9cc8ee"/>
<path d="M7.4 493.4 l3.2-0.5 v3.3 h-3.2z M11.2 492.8 l4-0.6 v4 h-4z M7.4 496.8 h3.2 v3.3 l-3.2-0.5z M11.2 496.8 h4 v4 l-4-0.6z" fill="#fff"/>
<rect x="30.6" y="491.4" width="7.4" height="10.4" fill="#7aa8c8" stroke="#c8e0f0" stroke-width="0.5"/><rect x="31.6" y="492.4" width="5.4" height="2.4" fill="#d8ecf8"/><path d="M31.8 496.4 h5 M31.8 498.2 h5 M31.8 500 h5" stroke="#e8f4fc" stroke-width="0.9" stroke-dasharray="1.1 0.8"/>
<circle cx="57.6" cy="496.6" r="5.4" fill="#fff"/><path d="M55 492.8 l2.6 4 2.8-4 M57.6 496.8 v3.8" stroke="#e8202a" stroke-width="1.5" fill="none" stroke-linecap="round"/>
<path d="M75.4 492.4 h4 l1 1 h6.2 v7.6 h-11.2z" fill="#f0c040"/><rect x="75.4" y="495.2" width="11.2" height="5.8" fill="#f8dc70"/><rect x="77.6" y="498" width="6.8" height="3" fill="#4a9ad8"/>
<path d="M98.4 493.4 l4.4 1.8 3.8-3 2 0.8 v8.6 l-2 0.8 -3.8-3.4 -2 1.4 -1.4-0.6z" fill="#2a78c8"/><path d="M102.8 497 l3-2.4 v4.8z" fill="#1c2c38"/><path d="M106.6 491 l3 -1.2 v3z" fill="#7ab8f0"/>
<circle cx="126.6" cy="496.8" r="4.6" fill="#6a50b0"/><path d="M122.6 498.6 a4.6 4.6 0 0 0 8.4 0.6 l-2.4-3.4z" fill="#e8902a"/><circle cx="127.2" cy="495.2" r="2" fill="#d8dcf8"/><path d="M124 493 l3-2.6" stroke="#c8d0f0" stroke-width="0.8"/>
<path d="M797 497.6 l2.4-2.4 2.4 2.4" fill="none" stroke="#fff" stroke-width="0.6"/>
<rect x="806.6" y="493.6" width="6.6" height="4.6" fill="none" stroke="#fff" stroke-width="0.6"/><path d="M808 500 h4.4 M805.6 496 v4 h2" stroke="#fff" stroke-width="0.6" fill="none"/>
<path d="M818 495.6 h1.4 l1.8-1.6 v5.6 l-1.8-1.6 h-1.4z" fill="none" stroke="#fff" stroke-width="0.55"/><path d="M822.6 495.6 l2 2 m0-2 l-2 2" stroke="#fff" stroke-width="0.5"/>
<text x="830.0" y="499.0" font-size="5.20" fill="#fff" textLength="11.0" lengthAdjust="spacingAndGlyphs" >ENG</text>
<text x="859.0" y="494.0" font-size="5.20" fill="#fff" textLength="12.4" lengthAdjust="spacingAndGlyphs" text-anchor="middle" >15:41</text>
<text x="859.0" y="503.0" font-size="5.20" fill="#fff" textLength="25.0" lengthAdjust="spacingAndGlyphs" text-anchor="middle" >22.06.2022</text>
<path d="M881.4 493.4 h7 v5 h-3.4 l-1.4 1.6 v-1.6 h-2.2z" fill="#fff"/><path d="M882.6 495 h4.6 M882.6 496.6 h4.6" stroke="#1c2c38" stroke-width="0.5"/>
<rect x="897.4" y="487" width="0.5" height="19" fill="#5a6a78"/>

</svg></body></html>
